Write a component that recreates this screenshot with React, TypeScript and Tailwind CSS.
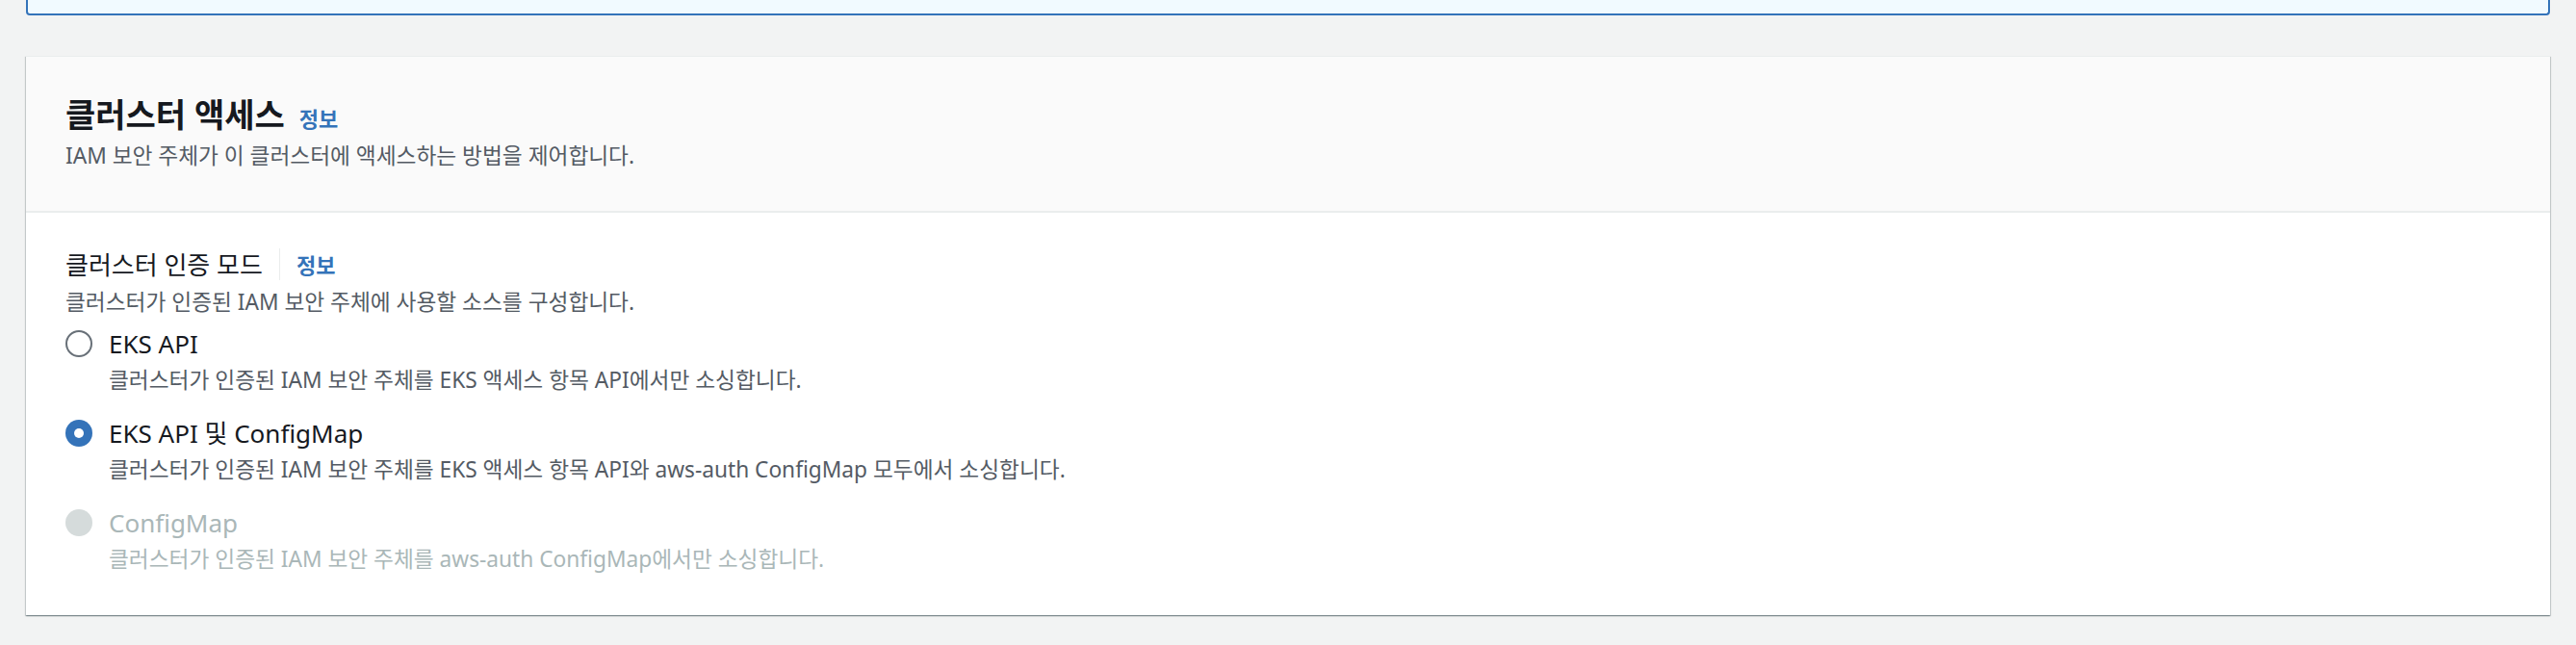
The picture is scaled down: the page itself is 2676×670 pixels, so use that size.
import { useState } from 'react';

const font = "font-['Noto_Sans','Noto_Sans_CJK_KR',sans-serif]";

type Option = {
  id: string;
  label: string;
  description: string;
  disabled?: boolean;
};

const options: Option[] = [
  {
    id: 'api',
    label: 'EKS API',
    description: '클러스터가 인증된 IAM 보안 주체를 EKS 액세스 항목 API에서만 소싱합니다.',
  },
  {
    id: 'api-configmap',
    label: 'EKS API 및 ConfigMap',
    description:
      '클러스터가 인증된 IAM 보안 주체를 EKS 액세스 항목 API와 aws-auth ConfigMap 모두에서 소싱합니다.',
  },
  {
    id: 'configmap',
    label: 'ConfigMap',
    description: '클러스터가 인증된 IAM 보안 주체를 aws-auth ConfigMap에서만 소싱합니다.',
    disabled: true,
  },
];

function Radio({ checked, disabled }: { checked: boolean; disabled?: boolean }) {
  if (disabled) {
    return <span className="block h-[28px] w-[28px] shrink-0 rounded-full bg-[#d5dbdb]" />;
  }
  if (checked) {
    return (
      <span className="flex h-[28px] w-[28px] shrink-0 items-center justify-center rounded-full bg-[#3473b9]">
        <span className="block h-[10px] w-[10px] rounded-full bg-white" />
      </span>
    );
  }
  return <span className="block h-[28px] w-[28px] shrink-0 rounded-full border-2 border-[#687078] bg-white" />;
}

export default function App() {
  const [mode, setMode] = useState('api-configmap');

  return (
    <div className={`${font} min-h-[670px] w-full bg-[#f2f3f3] px-[27px]`}>
      {/* previous panel, cut off at the top */}
      <div className="h-[16px] rounded-b-[4px] border-2 border-t-0 border-[#3473b9] bg-[#f1faff]" />

      <section className="mt-[42px] border-t border-[#eaeded] bg-white shadow-[0_1px_1px_0_rgba(0,28,36,0.3),1px_1px_1px_0_rgba(0,28,36,0.15),-1px_1px_1px_0_rgba(0,28,36,0.15)]">
        <header className="border-b-2 border-[#eaeded] bg-[#fafafa] pl-[41px] pt-[38px] pb-[43px]">
          <div className="flex items-baseline gap-[15px]">
            <h2 className="text-[34px] font-bold leading-[44px] text-[#16191f]">클러스터 액세스</h2>
            <a className="text-[22px] font-bold leading-[44px] text-[#3473b9]">정보</a>
          </div>
          <p className="mt-[3px] text-[22.7px] leading-[28px] text-[#545b64]">
            IAM 보안 주체가 이 클러스터에 액세스하는 방법을 제어합니다.
          </p>
        </header>

        <div className="pl-[41px] pt-[37px] pb-[44px]">
          <div className="flex items-center">
            <span className="text-[26px] leading-[32px] text-[#16191f]">클러스터 인증 모드</span>
            <span className="mx-[17px] h-[33px] w-px bg-[#eaeded]" />
            <a className="text-[22px] font-bold leading-[32px] text-[#3473b9]">정보</a>
          </div>
          <p className="mt-[9px] text-[22.7px] leading-[28px] text-[#545b64]">
            클러스터가 인증된 IAM 보안 주체에 사용할 소스를 구성합니다.
          </p>

          <div className="mt-[13px] flex flex-col gap-[25px]">
            {options.map((o) => (
              <label
                key={o.id}
                onClick={() => !o.disabled && setMode(o.id)}
                className={`flex gap-[17px] ${o.disabled ? 'cursor-default' : 'cursor-pointer'}`}
              >
                <div className="pt-[2px]">
                  <Radio checked={mode === o.id} disabled={o.disabled} />
                </div>
                <div>
                  <div
                    className={`text-[26px] leading-[32px] ${o.disabled ? 'text-[#aab7b8]' : 'text-[#16191f]'}`}
                  >
                    {o.label}
                  </div>
                  <div
                    className={`mt-[8px] text-[22.7px] leading-[28px] ${o.disabled ? 'text-[#aab7b8]' : 'text-[#545b64]'}`}
                  >
                    {o.description}
                  </div>
                </div>
              </label>
            ))}
          </div>
        </div>
      </section>
    </div>
  );
}
